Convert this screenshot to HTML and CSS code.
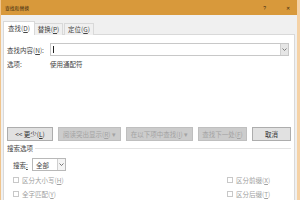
FILE: index.html
```html
<!DOCTYPE html>
<html lang="zh">
<head>
<meta charset="utf-8">
<link rel="stylesheet" href="styles.css">
</head>
<body>
<div class="win">
  <div class="titlebar">
    <span class="title">查找和替换</span>
    <span class="help">?</span>
    <span class="close">✕</span>
  </div>
  <div class="body">
    <div class="tabs">
      <div class="tab active">查找(<u>D</u>)</div>
      <div class="tab t2">替换(<u>P</u>)</div>
      <div class="tab t3">定位(<u>G</u>)</div>
    </div>
    <div class="panel">
      <div class="find-row">
        <span class="lbl">查找内容(<u>N</u>):</span>
        <div class="input"><span class="caret"></span><span class="ddbtn"><svg width="5" height="3" viewBox="0 0 5 3"><path d="M0.5 0.5 L2.5 2.5 L4.5 0.5" fill="none" stroke="#666" stroke-width="0.8"/></svg></span></div>
      </div>
      <div class="opt-row">
        <span class="lbl">选项:</span>
        <span class="optval">使用通配符</span>
      </div>
      <div class="buttons">
        <div class="btn b1">&lt;&lt; 更少(<u>L</u>)</div>
        <div class="btn dis b2">阅读突出显示(<u>R</u>) ▾</div>
        <div class="btn dis b3">在以下项中查找(<u>I</u>) ▾</div>
        <div class="btn dis b4">查找下一处(<u>F</u>)</div>
        <div class="btn b5">取消</div>
      </div>
      <div class="section"><span>搜索选项</span><span class="rule"></span></div>
      <div class="search-row">
        <span class="lbl">搜索<u>:</u></span>
        <div class="select"><span class="selval">全部</span><span class="seldd"><svg width="5" height="3" viewBox="0 0 5 3"><path d="M0.5 0.5 L2.5 2.5 L4.5 0.5" fill="none" stroke="#555" stroke-width="0.8"/></svg></span></div>
      </div>
      <div class="checks">
        <label class="chk"><span class="box"></span>区分大小写(<u>H</u>)</label>
        <label class="chk"><span class="box"></span>区分前缀(<u>X</u>)</label>
        <label class="chk"><span class="box"></span>全字匹配(<u>Y</u>)</label>
        <label class="chk"><span class="box"></span>区分后缀(<u>T</u>)</label>
      </div>
    </div>
  </div>
</div>
</body>
</html>
```

FILE: styles.css
```css
* { box-sizing: border-box; }
html, body { margin: 0; padding: 0; }
body {
  width: 300px;
  height: 200px;
  overflow: hidden;
  font-family: "Noto Sans CJK SC", "Noto Sans", sans-serif;
  font-size: 6.5px;
  color: #444;
}
u { text-decoration: underline; }
.win {
  width: 300px;
  height: 200px;
  overflow: hidden;
  background: #f0f0f0;
  display: flex;
  flex-direction: column;
  border-left: 1px solid #f0c48c;
  border-right: 3px solid #f5d2a6;
}
.titlebar {
  height: 15px;
  flex: none;
  background: #d8993b;
  display: flex;
  align-items: center;
  padding-left: 4px;
  color: #3a2a10;
}
.title { font-size: 4.8px; }
.help { margin-left: auto; font-size: 5px; font-family: "Liberation Sans", sans-serif; }
.close { margin-left: 20px; margin-right: 7px; font-size: 5px; }
.body {
  padding: 6px 2px 0 2px;
  flex: 1;
  min-height: 0;
  display: flex;
  flex-direction: column;
}
.tabs {
  display: flex;
  align-items: flex-end;
  height: 14px;
  flex: none;
  position: relative;
  z-index: 1;
}
.tab {
  height: 12px;
  border: 1px solid #d9d9d9;
  border-bottom: none;
  background: #f0f0f0;
  display: flex;
  align-items: center;
  justify-content: center;
  line-height: 1;
}
.tab.active {
  height: 14px;
  width: 32px;
  background: #fff;
  padding-bottom: 1px;
}
.tab.t2 { width: 28px; border-left: none; }
.tab.t3 { width: 30px; margin-left: 1px; }
.panel {
  margin-top: -1px;
  border: 1px solid #d9d9d9;
  border-bottom: none;
  background: #fff;
  flex: 1;
  min-height: 0;
  overflow: hidden;
  padding: 8px 3px 0 3px;
}
.find-row {
  display: flex;
  align-items: center;
  height: 13px;
}
.find-row .lbl { width: 43px; }
.input {
  width: 239px;
  height: 13px;
  border: 1px solid #c8c8c8;
  display: flex;
  align-items: stretch;
  padding-left: 2px;
}
.caret { width: 1px; margin: 2px 0; background: #222; }
.ddbtn {
  margin-left: auto;
  width: 8px;
  background: #e6e6e6;
  border-left: 1px solid #d0d0d0;
  display: flex;
  align-items: center;
  justify-content: center;
}
.opt-row {
  margin-top: 3px;
  height: 10px;
  display: flex;
  align-items: center;
}
.opt-row .lbl { width: 43px; }
.buttons {
  margin-top: 58px;
  display: flex;
  gap: 5px;
  height: 14px;
}
.btn {
  height: 14px;
  border: 1px solid #adadad;
  background: #e1e1e1;
  display: flex;
  align-items: center;
  justify-content: center;
  white-space: nowrap;
  color: #333;
}
.btn.dis { background: #cccccc; border-color: #bfbfbf; color: #a3a3a3; }
.b1 { width: 46px; }
.b2 { width: 63px; }
.b3 { width: 67px; }
.b4 { width: 49px; }
.b5 { width: 39px; }
.section {
  margin-top: 2px;
  height: 10px;
  display: flex;
  align-items: center;
}
.rule { flex: 1; height: 1px; background: #e3e3e3; margin-left: 2px; }
.search-row {
  margin-top: 5px;
  height: 13px;
  display: flex;
  align-items: center;
  padding-left: 6px;
}
.search-row .lbl { width: 19px; }
.select {
  width: 34px;
  height: 13px;
  border: 1px solid #b8b8b8;
  display: flex;
  align-items: stretch;
  background: #fff;
}
.selval { flex: 1; display: flex; align-items: center; padding-left: 3px; }
.seldd {
  width: 8px;
  border-left: 1px solid #cfcfcf;
  background: #f4f4f4;
  display: flex;
  align-items: center;
  justify-content: center;
}
.checks {
  display: grid;
  grid-template-columns: 214px auto;
  padding-left: 6px;
  margin-top: 2px;
}
.chk {
  height: 14px;
  display: flex;
  align-items: center;
  color: #a0a0a0;
}
.box {
  width: 6px;
  height: 6px;
  border: 1px solid #c8c8c8;
  background: #fff;
  margin-right: 3px;
}
```
